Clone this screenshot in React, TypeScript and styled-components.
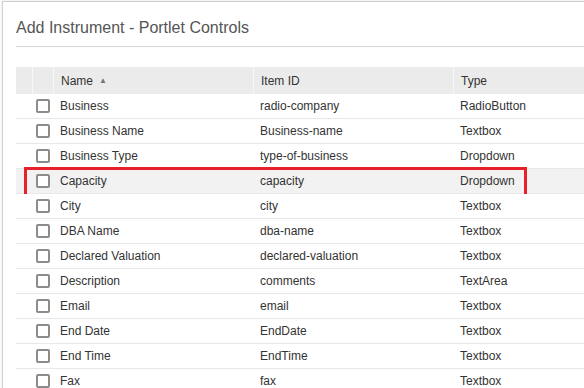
import React from "react";
import styled, { createGlobalStyle } from "styled-components";

const rows = [
  { name: "Business", itemId: "radio-company", type: "RadioButton" },
  { name: "Business Name", itemId: "Business-name", type: "Textbox" },
  { name: "Business Type", itemId: "type-of-business", type: "Dropdown" },
  { name: "Capacity", itemId: "capacity", type: "Dropdown", marked: true },
  { name: "City", itemId: "city", type: "Textbox" },
  { name: "DBA Name", itemId: "dba-name", type: "Textbox" },
  { name: "Declared Valuation", itemId: "declared-valuation", type: "Textbox" },
  { name: "Description", itemId: "comments", type: "TextArea" },
  { name: "Email", itemId: "email", type: "Textbox" },
  { name: "End Date", itemId: "EndDate", type: "Textbox" },
  { name: "End Time", itemId: "EndTime", type: "Textbox" },
  { name: "Fax", itemId: "fax", type: "Textbox" },
];

const GlobalStyle = createGlobalStyle`
  html, body {
    margin: 0;
    background: #fff;
    overflow: hidden;
    font-family: "Liberation Sans", Arial, sans-serif;
  }
`;

const Panel = styled.div`
  margin: 1px 0 0 2px;
  width: 760px;
  height: 600px;
  border: 1px solid #cfcfcf;
  box-shadow: 0 0 2px rgba(0, 0, 0, 0.12);
  background: #fff;
  padding: 0 0 0 13px;
`;

const Title = styled.h2`
  margin: 0;
  padding: 17px 0 9px 0;
  font-size: 16px;
  font-weight: 400;
  line-height: 18px;
  color: #555;
  border-bottom: 1px solid #d6d6d6;
`;

const Table = styled.div`
  margin-top: 20px;
  font-size: 12px;
  color: #333;
`;

const HeaderRow = styled.div`
  display: grid;
  grid-template-columns: 16px 21px 200px 200px 1fr;
  height: 27px;
  background: #ebebeb;
`;

const HeadCell = styled.div<{ $first?: boolean }>`
  display: flex;
  align-items: center;
  padding-left: 7px;
  border-left: ${(p) => (p.$first ? "none" : "1px solid #f7f7f7")};
`;

const SortArrow = styled.span`
  margin-left: 6px;
  font-size: 8px;
  color: #777;
`;

const Row = styled.div<{ $marked?: boolean }>`
  position: relative;
  display: grid;
  grid-template-columns: 16px 21px 200px 200px 1fr;
  height: 24px;
  border-bottom: 1px solid #e8e8e8;
  background: ${(p) => (p.$marked ? "#f2f2f2" : "#fff")};

  ${(p) =>
    p.$marked &&
    `
    &::after {
      content: "";
      position: absolute;
      left: 8px;
      top: -2px;
      width: 497px;
      height: 24px;
      border: 3px solid #e8202a;
      pointer-events: none;
    }
  `}
`;

const Cell = styled.div`
  display: flex;
  align-items: center;
  padding-left: 7px;
  white-space: nowrap;
`;

const CheckCell = styled.div`
  display: flex;
  align-items: center;
  justify-content: center;
  padding-left: 1px;
`;

const Checkbox = styled.span`
  display: block;
  box-sizing: border-box;
  width: 14px;
  height: 14px;
  border: 2px solid #8c8c8c;
  border-radius: 2px;
  background: #fff;
`;

export default function App() {
  return (
    <>
      <GlobalStyle />
      <Panel>
        <Title>Add Instrument - Portlet Controls</Title>
        <Table>
          <HeaderRow>
            <HeadCell $first />
            <HeadCell />
            <HeadCell>
              Name<SortArrow>▲</SortArrow>
            </HeadCell>
            <HeadCell>Item ID</HeadCell>
            <HeadCell>Type</HeadCell>
          </HeaderRow>
          {rows.map((r) => (
            <Row key={r.itemId} $marked={r.marked}>
              <div />
              <CheckCell>
                <Checkbox />
              </CheckCell>
              <Cell>{r.name}</Cell>
              <Cell>{r.itemId}</Cell>
              <Cell>{r.type}</Cell>
            </Row>
          ))}
        </Table>
      </Panel>
    </>
  );
}
